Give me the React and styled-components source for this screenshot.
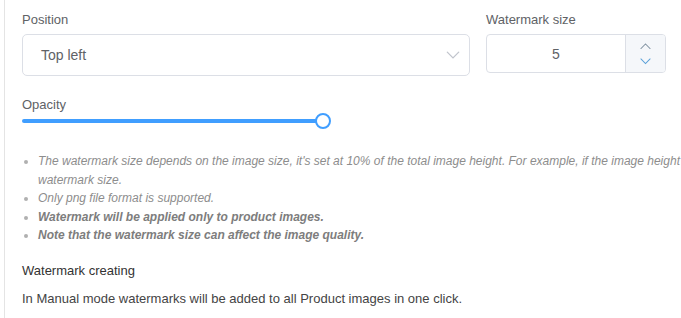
import React, { useState } from 'react';
import styled, { createGlobalStyle } from 'styled-components';

const GlobalStyle = createGlobalStyle`
  body {
    margin: 0;
    background: #fff;
    font-family: "Liberation Sans", Arial, sans-serif;
    overflow: hidden;
  }
`;

const Panel = styled.div`
  margin-left: 4px;
  border-left: 1px solid #e4e4e4;
  padding: 11px 0 20px 17px;
  min-height: 300px;
`;

const Row = styled.div`
  display: flex;
  gap: 16px;
  align-items: flex-start;
`;

const Field = styled.div`
  display: flex;
  flex-direction: column;
  width: ${(p) => p.$width}px;
`;

const Label = styled.div`
  font-size: 13px;
  line-height: 18px;
  color: #606266;
  margin-bottom: 5px;
`;

const Select = styled.div`
  height: 40px;
  border: 1px solid #dcdfe6;
  border-radius: 5px;
  display: flex;
  align-items: center;
  justify-content: space-between;
  padding: 0 9px 0 18px;
  font-size: 14px;
  color: #606266;
`;

const NumberBox = styled.div`
  height: 37px;
  border: 1px solid #dcdfe6;
  border-radius: 4px;
  display: flex;
  overflow: hidden;
`;

const NumberValue = styled.div`
  flex: 1;
  display: flex;
  align-items: center;
  justify-content: center;
  font-size: 14px;
  color: #606266;
`;

const Spinner = styled.div`
  width: 39px;
  border-left: 1px solid #dcdfe6;
  background: #f5f7fa;
  display: flex;
  flex-direction: column;
  align-items: center;
  justify-content: center;
  gap: 9px;
`;

const SliderWrap = styled.div`
  margin-top: 20px;
  width: 310px;
`;

const Track = styled.div`
  position: relative;
  height: 4px;
  width: 301px;
  margin-top: 4px;
  background: #409eff;
  border-radius: 2px;
`;

const Thumb = styled.div`
  position: absolute;
  right: -8px;
  top: -6px;
  width: 12px;
  height: 12px;
  border: 2px solid #409eff;
  border-radius: 50%;
  background: #fff;
`;

const Notes = styled.ul`
  margin: 29px 0 0;
  padding: 0 0 0 16px;
  font-size: 12px;
  line-height: 18.6px;
  font-style: italic;
  color: #8d8d8d;
  white-space: nowrap;
  li::marker {
    color: #b0b0b0;
  }
`;

const Note = styled.li`
  font-weight: ${(p) => (p.$strong ? 700 : 400)};
  color: ${(p) => (p.$strong ? '#7d7d7d' : '#8d8d8d')};
`;

const Heading = styled.div`
  margin-top: 17px;
  font-size: 13px;
  color: #333;
  line-height: 18px;
`;

const Text = styled.p`
  margin: 10px 0 0;
  font-size: 13px;
  color: #444;
  line-height: 18px;
`;

const Chevron = ({ up, color = '#c0c4cc', size = 12 }) => (
  <svg width={size} height={size / 2 + 1} viewBox="0 0 12 7" fill="none">
    <path
      d={up ? 'M1 6L6 1l5 5' : 'M1 1l5 5 5-5'}
      stroke={color}
      strokeWidth="1.1"
      strokeLinecap="round"
    />
  </svg>
);

export default function App() {
  const [size] = useState(5);

  return (
    <>
      <GlobalStyle />
      <Panel>
        <Row>
          <Field $width={448}>
            <Label>Position</Label>
            <Select>
              <span>Top left</span>
              <Chevron size={14} />
            </Select>
          </Field>
          <Field $width={180}>
            <Label>Watermark size</Label>
            <NumberBox>
              <NumberValue>{size}</NumberValue>
              <Spinner>
                <Chevron up size={11} color="#8a9aa8" />
                <Chevron size={11} color="#5aa0d8" />
              </Spinner>
            </NumberBox>
          </Field>
        </Row>

        <SliderWrap>
          <Label>Opacity</Label>
          <Track>
            <Thumb />
          </Track>
        </SliderWrap>

        <Notes>
          <Note>
            The watermark size depends on the image size, it's set at 10% of the total image height. For example, if the image height
            <br />
            watermark size.
          </Note>
          <Note>Only png file format is supported.</Note>
          <Note $strong>Watermark will be applied only to product images.</Note>
          <Note $strong>Note that the watermark size can affect the image quality.</Note>
        </Notes>

        <Heading>Watermark creating</Heading>
        <Text>In Manual mode watermarks will be added to all Product images in one click.</Text>
      </Panel>
    </>
  );
}
